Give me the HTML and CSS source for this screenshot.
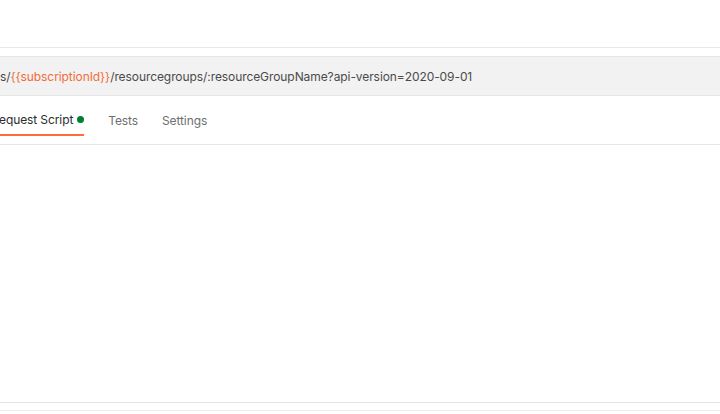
FILE: index.html
```html
<!DOCTYPE html>
<html>
<head>
<meta charset="utf-8">
<link rel="stylesheet" href="styles.css">
</head>
<body>
<div class="app">
  <div class="topbar"></div>
  <div class="spacer"></div>
  <div class="urlbar">
    <span class="url">s/<span class="var">{{subscriptionId}}</span>/resourcegroups/:resourceGroupName?api-version=2020-09-01</span>
  </div>
  <div class="tabs">
    <div class="tab active">equest Script <span class="dot"></span></div>
    <div class="tab">Tests</div>
    <div class="tab">Settings</div>
  </div>
  <div class="content"></div>
  <div class="footer"></div>
  <div class="footer2"></div>
</div>
</body>
</html>
```
FILE: styles.css
```css
html, body {
  margin: 0;
  padding: 0;
  background: #ffffff;
}
.app {
  width: 720px;
  height: 414px;
  display: flex;
  flex-direction: column;
  font-family: Inter, "Noto Sans", sans-serif;
  font-size: 12px;
  overflow: hidden;
}
.topbar {
  height: 47px;
  border-bottom: 1px solid #e8e8e8;
  flex: none;
}
.spacer {
  height: 8px;
  flex: none;
}
.urlbar {
  height: 38px;
  background: #f2f2f2;
  border-top: 1px solid #e6e6e6;
  border-bottom: 1px solid #e6e6e6;
  display: flex;
  align-items: center;
  flex: none;
}
.url {
  color: #4a4a4a;
  white-space: nowrap;
  letter-spacing: -0.08px;
  padding-top: 1px;
}
.var {
  color: #f26b3a;
}
.tabs {
  height: 48px;
  border-bottom: 1px solid #e6e6e6;
  display: flex;
  gap: 24px;
  flex: none;
}
.tab {
  display: flex;
  align-items: center;
  color: #6e6e6e;
  height: 40px;
  padding-top: 9px;
  box-sizing: border-box;
  letter-spacing: -0.1px;
}
.tab.active {
  color: #2b2b2b;
  border-bottom: 2px solid #ff6c37;
  margin-left: -1px;
  gap: 4px;
}
.dot {
  width: 7px;
  height: 7px;
  border-radius: 50%;
  background: #007f31;
  display: inline-block;
}
.content {
  height: 257px;
  border-bottom: 1px solid #e3e3e3;
  flex: none;
}
.footer {
  height: 7px;
  border-bottom: 1px solid #ececec;
  flex: none;
}
.footer2 {
  flex: 1;
}
```
